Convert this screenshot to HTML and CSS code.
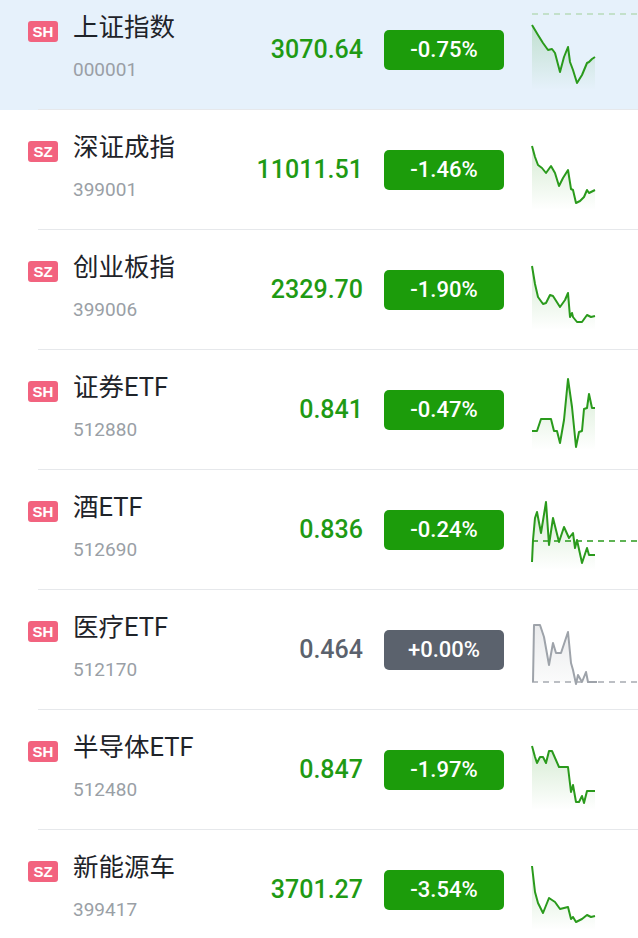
FILE: index.html
```html
<!DOCTYPE html>
<html lang="zh-CN">
<head>
  <meta charset="UTF-8" />
  <meta name="viewport" content="width=device-width, initial-scale=1.0"/>
  <title>自选</title>
  <link rel="stylesheet" href="styles.css">
</head>
<body>

<div class="list">

  <div class="row active">
    <span class="tag">SH</span>
    <div class="info">
      <div class="name">上证指数</div>
      <div class="code">000001</div>
    </div>
    <div class="price down">3070.64</div>
    <div class="change down">-0.75%</div>
    <svg class="spark" viewBox="0 0 106 80" width="106" height="80">
      <line class="base light" x1="0" y1="2" x2="106" y2="2" />
      <polygon class="fill" points="0,13 6,23 11,31 16,38 20,37 23,41 28,60 32,45 36,35 38,50 41,58 45,71 50,63 55,51 57,50 60,47 63,45 63,78 0,78" />
      <polyline class="line" points="0,13 6,23 11,31 16,38 20,37 23,41 28,60 32,45 36,35 38,50 41,58 45,71 50,63 55,51 57,50 60,47 63,45" />
    </svg>
  </div>

  <div class="row">
    <span class="tag">SZ</span>
    <div class="info">
      <div class="name">深证成指</div>
      <div class="code">399001</div>
    </div>
    <div class="price down">11011.51</div>
    <div class="change down">-1.46%</div>
    <svg class="spark" viewBox="0 0 106 80" width="106" height="80">
      <polygon class="fill" points="0,14 3,25 6,33 10,36 14,41 19,34 23,41 27,54 31,46 36,38 39,57 41,58 44,71 48,69 52,65 55,58 57,61 63,58 63,78 0,78" />
      <polyline class="line" points="0,14 3,25 6,33 10,36 14,41 19,34 23,41 27,54 31,46 36,38 39,57 41,58 44,71 48,69 52,65 55,58 57,61 63,58" />
    </svg>
  </div>

  <div class="row">
    <span class="tag">SZ</span>
    <div class="info">
      <div class="name">创业板指</div>
      <div class="code">399006</div>
    </div>
    <div class="price down">2329.70</div>
    <div class="change down">-1.90%</div>
    <svg class="spark" viewBox="0 0 106 80" width="106" height="80">
      <polygon class="fill" points="0,14 3,32 6,45 11,52 14,51 18,43 21,44 28,55 33,48 36,41 38,65 40,61 41,65 45,70 50,70 55,63 59,65 63,64 63,78 0,78" />
      <polyline class="line" points="0,14 3,32 6,45 11,52 14,51 18,43 21,44 28,55 33,48 36,41 38,65 40,61 41,65 45,70 50,70 55,63 59,65 63,64" />
    </svg>
  </div>

  <div class="row">
    <span class="tag">SH</span>
    <div class="info">
      <div class="name">证券ETF</div>
      <div class="code">512880</div>
    </div>
    <div class="price down">0.841</div>
    <div class="change down">-0.47%</div>
    <svg class="spark" viewBox="0 0 106 80" width="106" height="80">
      <polygon class="fill" points="0,59 5,59 9,47 19,47 22,59 25,59 28,71 32,48 36,7 40,35 42,55 44,75 47,60 50,59 52,37 55,36 57,22 60,36 63,36 63,78 0,78" />
      <polyline class="line" points="0,59 5,59 9,47 19,47 22,59 25,59 28,71 32,48 36,7 40,35 42,55 44,75 47,60 50,59 52,37 55,36 57,22 60,36 63,36" />
    </svg>
  </div>

  <div class="row">
    <span class="tag">SH</span>
    <div class="info">
      <div class="name">酒ETF</div>
      <div class="code">512690</div>
    </div>
    <div class="price down">0.836</div>
    <div class="change down">-0.24%</div>
    <svg class="spark" viewBox="0 0 106 80" width="106" height="80">
      <polygon class="fill" points="0,70 1,48 3,26 5,20 9,41 14,10 17,53 21,26 27,50 32,35 37,46 41,41 43,56 45,48 50,71 55,56 57,63 63,63 63,78 0,78" />
      <line class="base" x1="0" y1="49" x2="106" y2="49" />
      <polyline class="line" points="0,70 1,48 3,26 5,20 9,41 14,10 17,53 21,26 27,50 32,35 37,46 41,41 43,56 45,48 50,71 55,56 57,63 63,63" />
    </svg>
  </div>

  <div class="row">
    <span class="tag">SH</span>
    <div class="info">
      <div class="name">医疗ETF</div>
      <div class="code">512170</div>
    </div>
    <div class="price flat">0.464</div>
    <div class="change flat">+0.00%</div>
    <svg class="spark flat" viewBox="0 0 106 80" width="106" height="80">
      <polygon class="fill" points="1,70 2,13 8,13 12,25 17,53 21,31 24,41 29,41 36,20 39,51 41,58 44,72 46,63 50,70 54,60 56,70 65,70 65,70 1,70" />
      <line class="base" x1="0" y1="70" x2="106" y2="70" />
      <polyline class="line" points="1,70 2,13 8,13 12,25 17,53 21,31 24,41 29,41 36,20 39,51 41,58 44,72 46,63 50,70 54,60 56,70 65,70" />
    </svg>
  </div>

  <div class="row">
    <span class="tag">SH</span>
    <div class="info">
      <div class="name">半导体ETF</div>
      <div class="code">512480</div>
    </div>
    <div class="price down">0.847</div>
    <div class="change down">-1.97%</div>
    <svg class="spark" viewBox="0 0 106 80" width="106" height="80">
      <polygon class="fill" points="0,14 3,25 5,31 8,25 11,25 14,31 17,19 20,19 27,35 36,35 39,60 41,53 44,70 47,70 50,64 52,71 55,59 63,59 63,78 0,78" />
      <polyline class="line" points="0,14 3,25 5,31 8,25 11,25 14,31 17,19 20,19 27,35 36,35 39,60 41,53 44,70 47,70 50,64 52,71 55,59 63,59" />
    </svg>
  </div>

  <div class="row">
    <span class="tag">SZ</span>
    <div class="info">
      <div class="name">新能源车</div>
      <div class="code">399417</div>
    </div>
    <div class="price down">3701.27</div>
    <div class="change down">-3.54%</div>
    <svg class="spark" viewBox="0 0 106 80" width="106" height="80">
      <polygon class="fill" points="0,14 3,40 6,51 11,61 17,46 23,50 28,57 36,55 39,67 41,65 44,70 50,67 55,63 59,65 63,64 63,78 0,78" />
      <polyline class="line" points="0,14 3,40 6,51 11,61 17,46 23,50 28,57 36,55 39,67 41,65 44,70 50,67 55,63 59,65 63,64" />
    </svg>
  </div>

</div>

<svg width="0" height="0" class="defs">
  <defs>
    <linearGradient id="gGreen" x1="0" y1="0" x2="0" y2="1">
      <stop offset="0" stop-color="#2a9a1c" stop-opacity="0.2" />
      <stop offset="1" stop-color="#2a9a1c" stop-opacity="0" />
    </linearGradient>
    <linearGradient id="gGray" x1="0" y1="0" x2="0" y2="1">
      <stop offset="0" stop-color="#9ea3aa" stop-opacity="0.22" />
      <stop offset="1" stop-color="#9ea3aa" stop-opacity="0.04" />
    </linearGradient>
  </defs>
</svg>

</body>
</html>
```

FILE: styles.css
```css
body { margin: 0; padding: 0; background: #fff; font-family: Roboto, "Noto Sans CJK SC", sans-serif; overflow: hidden; }
.list { margin-top: -10px; }
.row { display: flex; align-items: flex-start; height: 120px; padding-left: 28px; box-sizing: border-box; background: linear-gradient(#e6e8eb, #e6e8eb) no-repeat 38px 100% / 100% 1px; }
.row.active { background-color: #e6f1fb; }
.tag { margin-top: 31px; width: 30px; height: 21px; line-height: 21px; text-align: center; background: #f2637f; color: #fff; font-size: 15px; font-weight: 700; border-radius: 3px; font-family: "Liberation Sans", Arial, sans-serif; }
.info { flex: 1; margin-left: 15px; margin-top: 21px; }
.name { font-size: 25.5px; line-height: 33px; color: #1e2329; }
.code { margin-top: 13px; font-size: 19px; line-height: 25px; color: #9a9fa6; }
.price { margin-top: 45px; font-size: 25px; line-height: 30px; font-weight: 500; text-align: right; }
.price.down { color: #1f9a14; }
.price.flat { color: #5b626d; }
.change { margin-top: 40px; margin-left: 21px; width: 120px; height: 40px; line-height: 40px; border-radius: 5px; text-align: center; color: #fff; font-size: 22px; font-weight: 500; }
.change.down { background: #1c9c0b; }
.change.flat { background: #5b626d; }
.spark { margin-top: 22px; margin-left: 28px; flex: none; display: block; overflow: visible; }
.spark .line { fill: none; stroke: #2a9a1c; stroke-width: 2; stroke-linejoin: round; }
.spark .fill { fill: url(#gGreen); }
.spark .base { stroke: #2a9a1c; stroke-width: 1.5; stroke-dasharray: 6 5; }
.spark .base.light { stroke: #9fd09a; stroke-width: 1.2; }
.spark.flat .line { stroke: #9ea3aa; }
.spark.flat .fill { fill: url(#gGray); }
.spark.flat .base { stroke: #a7abb1; }
.defs { position: absolute; }
```
